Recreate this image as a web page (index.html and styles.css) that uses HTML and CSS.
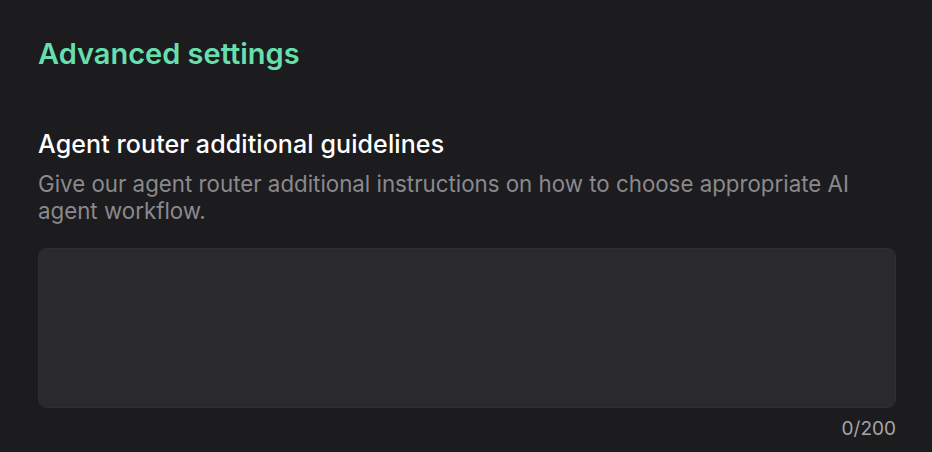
FILE: index.html
```html
<!DOCTYPE html>
<html>

<head>
  <title>Advanced settings</title>
  <link rel="stylesheet" href="styles.css">
</head>

<body>
  <div class="panel">
    <h2 class="panel-title">Advanced settings</h2>

    <div class="field">
      <label class="field-label" for="guidelines">Agent router additional guidelines</label>
      <p class="field-help">Give our agent router additional instructions on how to choose appropriate AI agent workflow.</p>
      <textarea id="guidelines" class="field-input" maxlength="200"></textarea>
      <div class="field-count">0/200</div>
    </div>
  </div>
</body>

</html>
```

FILE: styles.css
```css
body {
  margin: 0;
  padding: 0;
  background-color: #1c1b1e;
  font-family: Inter, "Noto Sans", sans-serif;
}

.panel {
  padding: 36px 36px 0 38px;
}

.panel-title {
  margin: 0;
  font-size: 29px;
  line-height: 36px;
  font-weight: 600;
  color: #66dfad;
}

.field {
  margin-top: 57px;
}

.field-label {
  display: block;
  font-size: 25px;
  line-height: 30px;
  font-weight: 500;
  letter-spacing: 0.1px;
  color: #ffffff;
}

.field-help {
  margin: 11px 0 0 0;
  font-size: 22.3px;
  line-height: 27px;
  color: #8a898d;
}

.field-input {
  display: block;
  box-sizing: border-box;
  width: 100%;
  height: 160px;
  margin-top: 24px;
  padding: 12px 16px;
  background-color: #2a2a2d;
  border: 1px solid #2f2f32;
  border-radius: 9px;
  resize: none;
  color: #fff;
  font-family: inherit;
  font-size: 18px;
  outline: none;
}

.field-count {
  margin-top: 9px;
  text-align: right;
  font-size: 19px;
  line-height: 24px;
  color: #a6a6aa;
}
```
